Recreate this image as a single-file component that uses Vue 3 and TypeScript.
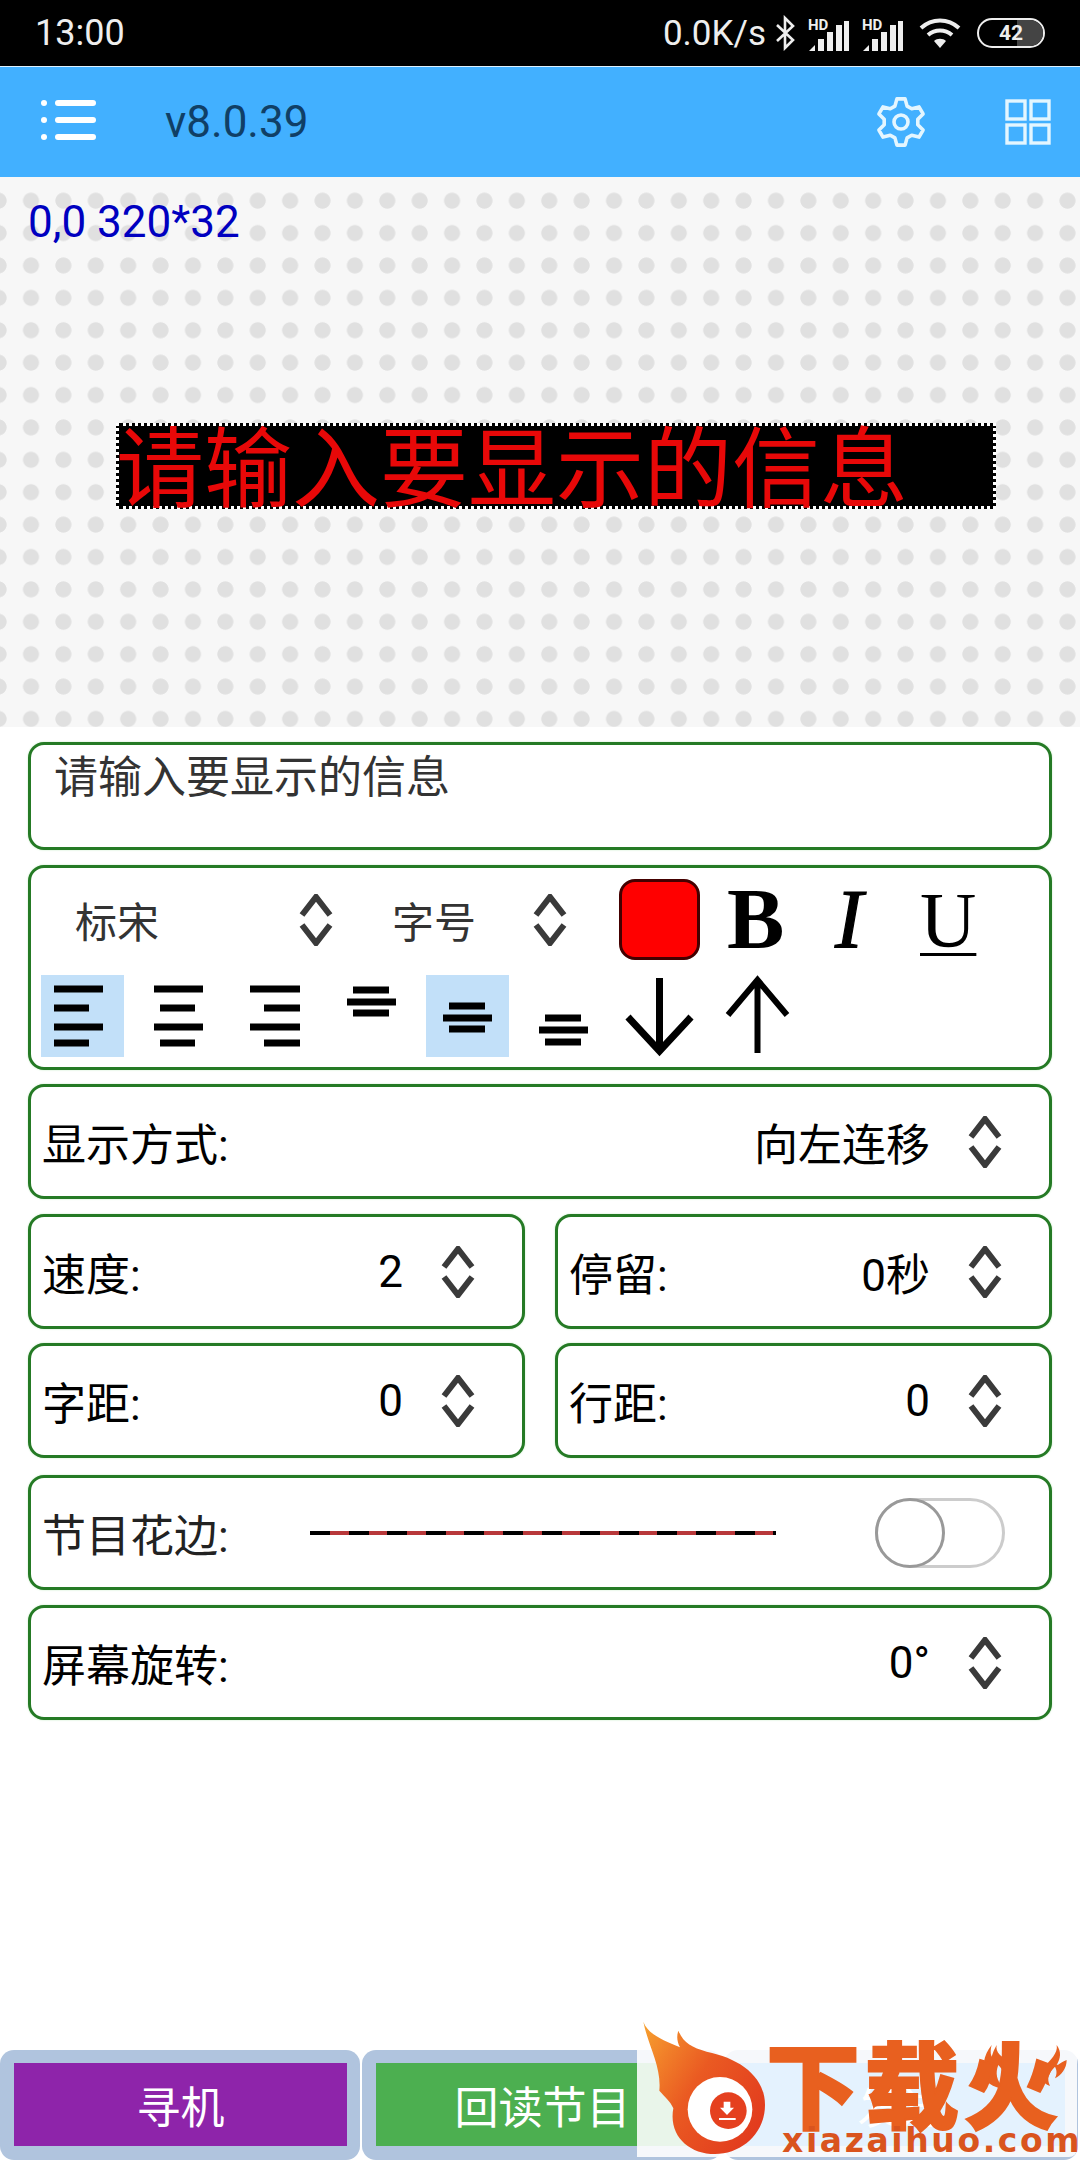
<template>
  <div class="page">
    <div class="status">
      <span class="time">13:00</span>
      <div class="status-right">
        <span class="speed">0.0K/s</span>
        <svg class="bt" width="20" height="36" viewBox="0 0 20 36"><path d="M2 10 L18 25 L10 33 V3 L18 11 L2 26" fill="none" stroke="#eee" stroke-width="2.6" /></svg>
        <svg v-for="n in 2" :key="n" class="signal" width="42" height="36" viewBox="0 -4 42 36">
          <text x="0" y="11" class="hd">HD</text>
          <path d="M1 32 L7 26 V32 Z" fill="#eee" />
          <rect x="10" y="20" width="6" height="12" fill="#eee" />
          <rect x="19" y="13" width="6" height="19" fill="#eee" />
          <rect x="28" y="6" width="6" height="26" fill="#eee" />
          <rect x="36" y="2" width="5" height="30" fill="#eee" />
        </svg>
        <svg class="wifi" width="42" height="30" viewBox="0 0 42 30">
          <path d="M2 10 C13 0 29 0 40 10 M9 17 C16 11 26 11 33 17" fill="none" stroke="#eee" stroke-width="4" />
          <path d="M15 23 C18 20 24 20 27 23 L21 30 Z" fill="#eee" />
        </svg>
        <div class="battery"><span class="battery-fill"></span><span class="battery-num">42</span></div>
      </div>
    </div>

    <header class="appbar">
      <div class="menu">
        <div v-for="n in 3" :key="n" class="menu-line"><i></i><b></b></div>
      </div>
      <span class="version">v8.0.39</span>
      <svg class="gear" width="52" height="52" viewBox="-26 -26 52 52">
        <path :d="gearPath" fill="none" stroke="#e4f6ff" stroke-width="3.6" stroke-linejoin="round" />
        <circle r="7" fill="none" stroke="#e4f6ff" stroke-width="3.6" />
      </svg>
      <svg class="grid-icon" width="46" height="46" viewBox="0 0 46 46">
        <g fill="none" stroke="#e4f6ff" stroke-width="3.4">
          <rect x="2" y="2" width="18" height="18" />
          <rect x="26" y="2" width="18" height="18" />
          <rect x="2" y="26" width="18" height="18" />
          <rect x="26" y="26" width="18" height="18" />
        </g>
      </svg>
    </header>

    <section class="canvas">
      <span class="coords">0,0 320*32</span>
      <div class="led"><span class="led-text">请输入要显示的信息</span></div>
    </section>

    <main class="form">
      <div class="card input-card">请输入要显示的信息</div>

      <div class="card tool-card">
        <div class="tool-top">
          <span class="font-name">标宋</span>
          <svg class="chev-s" width="34" height="52" viewBox="0 0 34 52"><polyline points="3,21 17,3 31,21" /><polyline points="3,31 17,49 31,31" /></svg>
          <span class="font-size">字号</span>
          <svg class="chev-s" width="34" height="52" viewBox="0 0 34 52"><polyline points="3,21 17,3 31,21" /><polyline points="3,31 17,49 31,31" /></svg>
          <span class="swatch"></span>
          <span class="fmt bold">B</span>
          <span class="fmt italic">I</span>
          <span class="fmt under">U</span>
        </div>
        <div class="tool-bottom">
          <div v-for="(icon, i) in alignIcons" :key="i" class="align" :class="{ on: icon.on }">
            <svg width="83" height="82" viewBox="0 0 83 82">
              <rect v-for="(b, j) in icon.bars" :key="j" :x="b[0]" :y="b[1]" :width="b[2]" height="7" fill="#000" />
            </svg>
          </div>
          <div class="align">
            <svg width="83" height="82" viewBox="0 0 83 82" class="arrow">
              <path d="M41.5 3 V76 M10 42 L41.5 76 L73 42" />
            </svg>
          </div>
          <div class="align">
            <svg width="83" height="82" viewBox="0 0 83 82" class="arrow thin">
              <path d="M43.5 6 V78 M14 40 L43.5 5 L73 40" />
            </svg>
          </div>
        </div>
      </div>

      <div class="card row first-row">
        <span class="label">显示方式:</span>
        <span class="value">向左连移</span>
        <svg class="chev" width="34" height="52" viewBox="0 0 34 52"><polyline points="3,21 17,3 31,21" /><polyline points="3,31 17,49 31,31" /></svg>
      </div>

      <div class="pair">
        <div v-for="item in pairsA" :key="item.label" class="card row">
          <span class="label">{{ item.label }}</span>
          <span class="value">{{ item.value }}</span>
          <svg class="chev" width="34" height="52" viewBox="0 0 34 52"><polyline points="3,21 17,3 31,21" /><polyline points="3,31 17,49 31,31" /></svg>
        </div>
      </div>

      <div class="pair second-pair">
        <div v-for="item in pairsB" :key="item.label" class="card row">
          <span class="label">{{ item.label }}</span>
          <span class="value">{{ item.value }}</span>
          <svg class="chev" width="34" height="52" viewBox="0 0 34 52"><polyline points="3,21 17,3 31,21" /><polyline points="3,31 17,49 31,31" /></svg>
        </div>
      </div>

      <div class="card row border-row">
        <span class="label border-label">节目花边:</span>
        <span class="border-line"></span>
        <span class="toggle"><span class="knob"></span></span>
      </div>

      <div class="card row">
        <span class="label">屏幕旋转:</span>
        <span class="value">0°</span>
        <svg class="chev" width="34" height="52" viewBox="0 0 34 52"><polyline points="3,21 17,3 31,21" /><polyline points="3,31 17,49 31,31" /></svg>
      </div>
    </main>

    <footer class="bottom">
      <div class="btn-wrap"><button class="btn purple">寻机</button></div>
      <div class="btn-wrap"><button class="btn green">回读节目</button></div>
      <div class="btn-wrap"><button class="btn blue">发送</button></div>
    </footer>

    <div class="watermark">
      <div class="wm-veil"></div>
      <svg class="wm-logo" width="460" height="150" viewBox="0 0 1380 450">
        <defs>
          <linearGradient id="flame" x1="0" y1="0" x2="1" y2="0.7">
            <stop offset="0" stop-color="#f7a12f" />
            <stop offset="0.5" stop-color="#ea5a22" />
            <stop offset="1" stop-color="#e23c1e" />
          </linearGradient>
        </defs>
        <path d="M70 35 C85 75 130 90 180 112 C170 92 170 78 175 62 C190 98 215 112 260 125 C360 145 435 200 435 285 C435 370 365 432 285 432 C205 432 145 375 160 295 C150 272 135 262 118 242 C125 170 85 110 70 35 Z" fill="url(#flame)" />
        <circle cx="300" cy="298" r="97" fill="#fff" />
        <circle cx="325" cy="302" r="55" fill="#e5401f" />
        <path d="M311 275 H331 V293 H342 L321 315 L300 293 H311 Z" fill="#fff" />
        <rect x="297" y="324" width="50" height="6" fill="#fff" />
        <g fill="#e8601f">
          <path d="M1115 105 C1090 135 1085 175 1095 205 C1105 225 1130 235 1150 235 C1130 210 1125 190 1135 165 C1150 180 1155 195 1150 215 C1170 190 1165 150 1140 135 C1130 125 1128 115 1130 105 C1122 120 1120 125 1115 140 C1110 130 1112 115 1115 105 Z" />
          <path d="M1310 105 C1315 130 1290 150 1270 175 C1255 195 1265 220 1290 228 C1280 205 1285 190 1305 170 C1310 180 1312 190 1305 205 C1325 195 1340 175 1340 150 C1325 155 1318 165 1310 165 C1322 145 1325 125 1310 105 Z" />
        </g>
      </svg>
      <span class="wm-title">下载火</span>
      <span class="wm-site">xiazaihuo.com</span>
    </div>
  </div>
</template>

<script setup lang="ts">
// six-tooth gear outline, tooth tips pointing up and down
function buildGear(): string {
  const pts: string[] = []
  for (let i = 0; i < 6; i++) {
    const a = -90 + i * 60
    const steps: [number, number][] = [[-21, 17], [-10, 23.5], [10, 23.5], [21, 17]]
    for (const [da, r] of steps) {
      const t = ((a + da) * Math.PI) / 180
      pts.push(`${(r * Math.cos(t)).toFixed(2)} ${(r * Math.sin(t)).toFixed(2)}`)
    }
  }
  return 'M' + pts.join(' L') + ' Z'
}
const gearPath = buildGear()

const alignIcons = [
  { on: true, bars: [[13, 10.5, 49], [13, 29.5, 35], [13, 48.5, 49], [13, 64.5, 35]] },
  { on: false, bars: [[17, 10.5, 49], [23, 29.5, 35], [17, 48.5, 49], [23, 64.5, 35]] },
  { on: false, bars: [[17, 10.5, 50], [31, 29.5, 36], [17, 48.5, 50], [31, 64.5, 36]] },
  { on: false, bars: [[23, 11.5, 36], [17, 23.5, 49], [23, 34.5, 36]] },
  { on: true, bars: [[23, 27.5, 36], [17, 39.5, 49], [23, 50.5, 36]] },
  { on: false, bars: [[23, 39.5, 36], [17, 51.5, 49], [23, 63.5, 36]] },
]

const pairsA = [
  { label: '速度:', value: '2' },
  { label: '停留:', value: '0秒' },
]
const pairsB = [
  { label: '字距:', value: '0' },
  { label: '行距:', value: '0' },
]
</script>

<style>
html, body { margin: 0; background: #fff; }
</style>

<style scoped>
.page {
  position: relative;
  width: 1080px;
  height: 2160px;
  overflow: hidden;
  display: flex;
  flex-direction: column;
  background: #fff;
  font-family: Roboto, "Noto Sans CJK SC", sans-serif;
}

/* status bar */
.status {
  height: 66px;
  background: #000;
  display: flex;
  align-items: center;
  justify-content: space-between;
  padding: 0 35px;
  color: #eee;
  border-bottom: 1px solid #dff2ff;
}
.time { font-size: 36px; }
.status-right { display: flex; align-items: center; }
.speed { font-size: 35px; margin-right: 9px; }
.bt { margin-right: 13px; }
.signal { margin-right: 12px; }
.hd { font: 700 15px Roboto, sans-serif; fill: #eee; }
.wifi { margin: 0 16px 0 3px; }
.battery {
  position: relative;
  width: 68px;
  height: 30px;
  box-sizing: border-box;
  border: 2.5px solid #eee;
  border-radius: 15px;
  display: flex;
  align-items: center;
  justify-content: center;
  overflow: hidden;
}
.battery-fill {
  position: absolute;
  right: 0;
  top: 0;
  bottom: 0;
  width: 26px;
  background: #444;
}
.battery-num { position: relative; font-size: 21px; line-height: 24px; font-weight: 700; color: #eee; }

/* app bar */
.appbar {
  height: 110px;
  background: #42b0ff;
  display: flex;
  align-items: center;
  flex-shrink: 0;
}
.menu { margin-left: 41px; width: 124px; display: flex; flex-direction: column; gap: 11px; margin-top: -4px; }
.menu-line { display: flex; align-items: center; gap: 8px; }
.menu-line i { width: 6px; height: 6px; border-radius: 3px; background: #fff; }
.menu-line b { width: 41px; height: 6px; border-radius: 3px; background: #fff; }
.version { font-size: 44px; color: #103f66; flex: 1; }
.gear { margin-right: 78px; }
.grid-icon { margin-right: 29px; }

/* led preview */
.canvas {
  position: relative;
  height: 550px;
  flex-shrink: 0;
  background-color: #f7f7f7;
  background-image: radial-gradient(circle at center, #e0e0e0 7.6px, rgba(224, 224, 224, 0) 8.4px);
  background-size: 32.4px 32.4px;
  background-position: 14.8px 7.5px;
}
.coords {
  position: absolute;
  left: 28px;
  top: 19px;
  font-size: 44px;
  color: #0000c0;
}
.led {
  position: absolute;
  left: 116px;
  top: 246px;
  width: 880px;
  height: 86px;
  box-sizing: border-box;
  background: #000;
  border: 3px dotted #fff;
  display: flex;
  align-items: center;
}
.led-text {
  font-size: 88px;
  line-height: 80px;
  white-space: nowrap;
  color: #e80808;
  margin: 7px 0 0 -3px;
}

/* form */
.form {
  flex: 1;
  padding: 15px 28px 0;
  display: flex;
  flex-direction: column;
}
.card {
  box-sizing: border-box;
  border: 3px solid #257a25;
  border-radius: 16px;
  box-shadow: 0 0 2px #bfe8bf;
  background: #fff;
}
.input-card {
  height: 108px;
  padding: 0 0 0 23px;
  font-size: 44px;
  line-height: 66px;
  color: #333;
}
.tool-card {
  height: 205px;
  margin-top: 15px;
  padding: 11px 0 0 10px;
}
.tool-top { display: flex; align-items: center; height: 81px; }
.font-name, .font-size { font-size: 42px; color: #333; }
.font-name { margin-left: 34px; width: 224px; }
.font-size { margin-left: 59px; width: 141px; }
.chev-s polyline, .chev polyline { fill: none; stroke: #3a3a3a; stroke-width: 6; }
.swatch {
  box-sizing: border-box;
  width: 81px;
  height: 81px;
  margin-left: 52px;
  background: #f00;
  border: 3px solid #400;
  border-radius: 16px;
}
.fmt { font-family: "Liberation Serif", serif; color: #000; line-height: 81px; }
.bold { font-size: 86px; font-weight: 700; margin-left: 27px; width: 57px; }
.italic { font-size: 84px; font-style: italic; margin-left: 51px; width: 35px; -webkit-text-stroke: 1.2px #000; }
.under { font-size: 78px; margin-left: 50px; text-decoration: underline; text-decoration-thickness: 3px; text-underline-offset: 7px; }
.tool-bottom { display: flex; gap: 13.2px; margin-top: 15px; }
.align { width: 83px; height: 82px; }
.align.on { background: #c2e0f9; }
.align svg { display: block; }
.arrow path { fill: none; stroke: #000; stroke-width: 7; }
.arrow.thin path { stroke-width: 6; }

.row {
  height: 115px;
  display: flex;
  align-items: center;
  padding: 0 47px 0 11px;
  margin-top: 15px;
  color: #000;
}
.first-row { margin-top: 14px; }
.label { font-size: 44px; flex: 1; white-space: nowrap; }
.value { font-size: 44px; margin-right: 38px; white-space: nowrap; }
.chev { flex-shrink: 0; }
.pair { display: grid; grid-template-columns: 497px 497px; column-gap: 30px; margin-top: 15px; }
.second-pair { margin-top: 14px; }
.pair .row { margin-top: 0; }
.border-row { margin-top: 17px; padding-right: 44px; }
.border-label { flex: none; width: 268px; color: #222; }
.border-line {
  width: 466px;
  height: 4px;
  background: repeating-linear-gradient(90deg, #000 0, #000 20px, #b8383a 20px, #b8383a 38.6px);
}
.toggle {
  position: relative;
  box-sizing: border-box;
  width: 130px;
  height: 70px;
  margin-left: auto;
  border: 3px solid #ccc;
  border-radius: 35px;
}
.knob {
  position: absolute;
  left: -3px;
  top: -3px;
  box-sizing: border-box;
  width: 70px;
  height: 70px;
  border-radius: 50%;
  border: 3px solid #999;
  background: #fff;
}

/* bottom buttons */
.bottom { height: 110px; display: flex; gap: 2px; flex-shrink: 0; }
.btn-wrap {
  flex: 0 0 360px;
  box-sizing: border-box;
  padding: 13px 13px 14px 14px;
  background: #b0c4de;
  border-radius: 14px;
}
.btn-wrap:last-child { flex: 1 1 0; margin-right: 2px; }
.btn {
  display: block;
  width: 100%;
  height: 100%;
  border: none;
  padding: 0;
  color: #fff;
  font-family: inherit;
  font-size: 44px;
}
.purple { background: #8e24aa; }
.green { background: #4caf50; }
.blue { background: #2196f3; }

/* watermark pasted over the corner */
.watermark { position: absolute; left: 620px; top: 2010px; width: 460px; height: 150px; }
.wm-veil {
  position: absolute;
  left: 17px;
  top: 40px;
  right: 3px;
  bottom: 3px;
  background: rgba(255, 255, 255, 0.88);
  border-radius: 0 8px 8px 0;
}
.wm-logo { position: absolute; left: 0; top: 0; }
.wm-title {
  position: absolute;
  left: 146px;
  top: 29px;
  font-family: "Noto Sans CJK SC", sans-serif;
  font-size: 94px;
  line-height: 84px;
  font-weight: 900;
  letter-spacing: 5px;
  color: #e8601f;
  -webkit-text-stroke: 2px #e8601f;
  white-space: nowrap;
}
.wm-site {
  position: absolute;
  left: 162px;
  top: 114px;
  font-family: "DejaVu Sans", sans-serif;
  font-weight: 700;
  font-size: 33px;
  line-height: 34px;
  letter-spacing: 2.6px;
  color: #d9541e;
  white-space: nowrap;
}
</style>
